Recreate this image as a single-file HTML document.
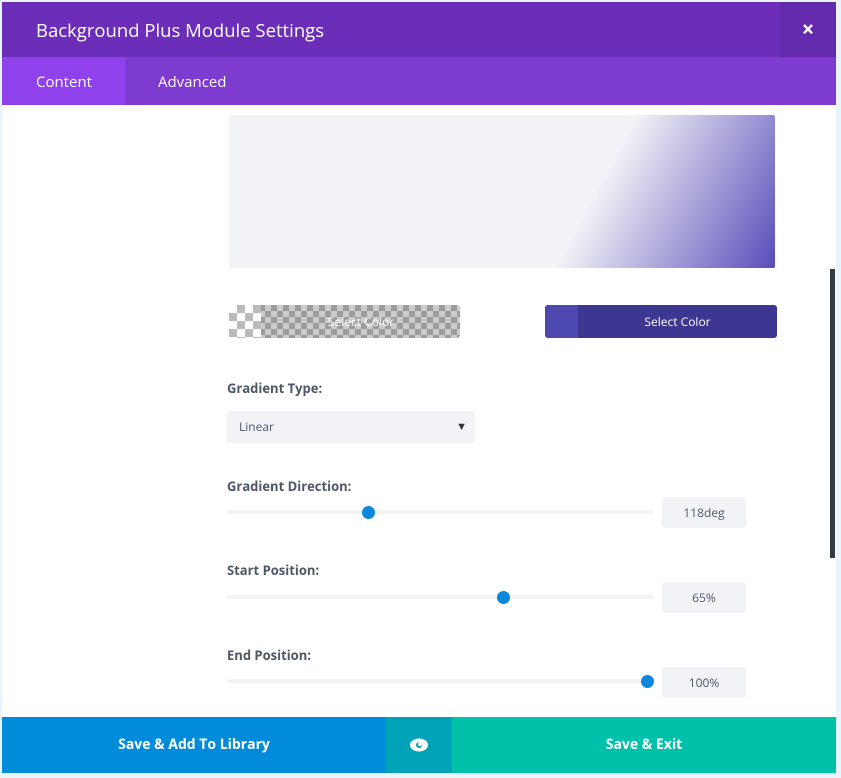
<!DOCTYPE html>
<html><head><meta charset="utf-8"><style>
*{margin:0;padding:0;box-sizing:border-box}
body{width:841px;height:778px;background:#e8f6fb;font-family:"Open Sans","Liberation Sans",sans-serif;position:relative;overflow:hidden}
.a{position:absolute}
.modal{left:2px;top:2px;width:834px;height:771px;background:#fff;overflow:hidden}
.lbl{font-size:13px;font-weight:bold;color:#4c5866;left:227px}
.track{left:227px;width:427px;height:4px;background:#f1f3f7;border-radius:2px}
.thumb{width:13px;height:13px;border-radius:50%;background:#0c87dc}
.val{left:662px;width:84px;height:31px;background:#f1f3f7;border-radius:3px;font-size:12px;color:#4c5866;text-align:center;line-height:31px}
</style></head><body>
<div class="a modal"></div>
<div class="a" style="left:2px;top:2px;width:834px;height:55px;background:#6c2eb9"></div>
<div class="a" style="left:36px;top:18px;color:#fff;font-size:18.5px;">Background Plus Module Settings</div>
<div class="a" style="left:780px;top:2px;width:56px;height:55px;background:#642aad;color:#fff;font-size:22px;font-weight:bold;text-align:center;line-height:55px">×</div>
<div class="a" style="left:2px;top:57px;width:834px;height:48px;background:#7e3bd0"></div>
<div class="a" style="left:2px;top:57px;width:123px;height:48px;background:#8f42ec"></div>
<div class="a" style="left:36px;top:72px;color:#fff;font-size:15px">Content</div>
<div class="a" style="left:158px;top:72px;color:#fff;font-size:15px">Advanced</div>

<div class="a" style="left:229px;top:115px;width:546px;height:153px;border-radius:2px;background:linear-gradient(118deg,#f1f3f7 65%,#5a4dba 100%)"></div>

<div class="a" style="left:229px;top:305px;width:231px;height:33px;border-radius:3px;background-color:#ccc;background-image:linear-gradient(45deg,#9c9c9c 25%,transparent 25%,transparent 75%,#9c9c9c 75%),linear-gradient(45deg,#9c9c9c 25%,transparent 25%,transparent 75%,#9c9c9c 75%);background-size:12px 12px;background-position:0 0,6px 6px"></div>
<div class="a" style="left:229px;top:305px;width:32px;height:33px;background-color:#fff;background-image:linear-gradient(45deg,#bbb 25%,transparent 25%,transparent 75%,#bbb 75%),linear-gradient(45deg,#bbb 25%,transparent 25%,transparent 75%,#bbb 75%);background-size:16px 16px;background-position:0 0,8px 8px"></div>
<div class="a" style="left:262px;top:305px;width:198px;height:33px;color:#fff;font-size:12px;text-align:center;line-height:33px">Select Color</div>

<div class="a" style="left:545px;top:305px;width:232px;height:33px;border-radius:3px;background:#3d3791"></div>
<div class="a" style="left:545px;top:305px;width:33px;height:33px;background:#4d47b0;border-radius:3px 0 0 3px"></div>
<div class="a" style="left:578px;top:305px;width:199px;height:33px;color:#fff;font-size:12px;text-align:center;line-height:33px">Select Color</div>

<div class="a lbl" style="top:379px">Gradient Type:</div>
<div class="a" style="left:227px;top:411px;width:248px;height:32px;background:#f1f3f7;border-radius:3px;font-size:12px;color:#4c5866;line-height:32px;padding-left:12px">Linear<span style="position:absolute;right:8px;font-size:11px;color:#333">▼</span></div>

<div class="a lbl" style="top:477px">Gradient Direction:</div>
<div class="a track" style="top:510px"></div>
<div class="a thumb" style="left:362px;top:506px"></div>
<div class="a val" style="top:497px">118deg</div>

<div class="a lbl" style="top:561px">Start Position:</div>
<div class="a track" style="top:595px"></div>
<div class="a thumb" style="left:497px;top:591px"></div>
<div class="a val" style="top:582px">65%</div>

<div class="a lbl" style="top:646px">End Position:</div>
<div class="a track" style="top:679px"></div>
<div class="a thumb" style="left:641px;top:675px"></div>
<div class="a val" style="top:667px">100%</div>

<div class="a" style="left:830px;top:269px;width:5px;height:289px;background:#333a42"></div>

<div class="a" style="left:2px;top:717px;width:384px;height:56px;background:#008bdb;color:#fff;font-size:14px;font-weight:bold;text-align:center;line-height:56px">Save &amp; Add To Library</div>
<div class="a" style="left:386px;top:717px;width:66px;height:56px;background:#00a3b7"><svg class="a" style="left:23px;top:21px" width="20" height="14" viewBox="0 0 20 14"><ellipse cx="10" cy="7" rx="9" ry="6.5" fill="#fff"/><circle cx="10" cy="7" r="3" fill="#00a3b7"/><circle cx="11" cy="6" r="2" fill="#fff"/></svg></div>
<div class="a" style="left:452px;top:717px;width:384px;height:56px;background:#00c1a9;color:#fff;font-size:14px;font-weight:bold;text-align:center;line-height:56px">Save &amp; Exit</div>
</body></html>
